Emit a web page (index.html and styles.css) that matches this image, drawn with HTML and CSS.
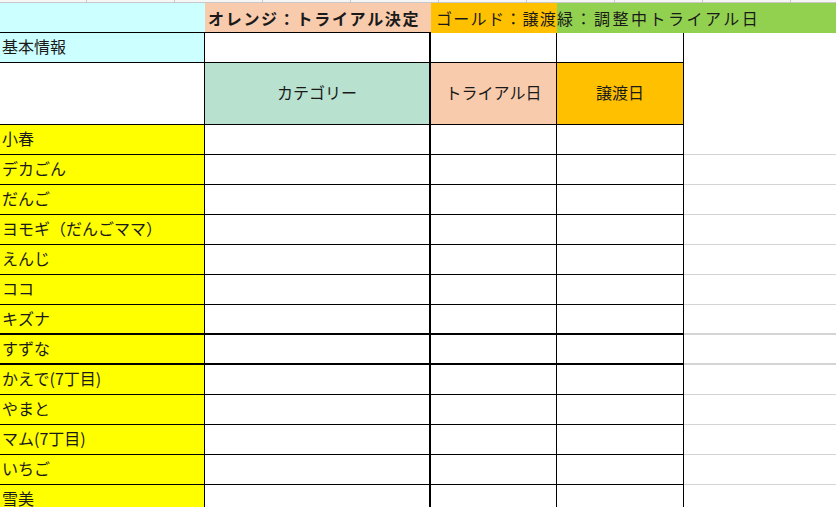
FILE: index.html
```html
<!DOCTYPE html>
<html lang="ja">
<head>
<meta charset="utf-8">
<title>シート</title>
<link rel="stylesheet" href="styles.css">
</head>
<body>
<div class="strip"></div>
<div class="sheet">
  <div class="cell l-cyan"></div>
  <div class="cell l-orange">オレンジ：トライアル決定</div>
  <div class="cell l-gold">ゴールド：譲渡</div>
  <div class="cell l-green">緑：調整中トライアル日</div>

  <div class="cell ca cyan">基本情報</div>
  <div class="cell cb"></div>
  <div class="cell cc"></div>
  <div class="cell cd"></div>
  <div class="cell cx"></div>

  <div class="cell ca"></div>
  <div class="cell cb mint center">カテゴリー</div>
  <div class="cell cc peach center">トライアル日</div>
  <div class="cell cd gold center">譲渡日</div>
  <div class="cell cx"></div>

  <div class="cell ca yellow">小春</div><div class="cell cb"></div><div class="cell cc"></div><div class="cell cd"></div><div class="cell ce"></div>
  <div class="cell ca yellow">デカごん</div><div class="cell cb"></div><div class="cell cc"></div><div class="cell cd"></div><div class="cell ce"></div>
  <div class="cell ca yellow">だんご</div><div class="cell cb"></div><div class="cell cc"></div><div class="cell cd"></div><div class="cell ce"></div>
  <div class="cell ca yellow">ヨモギ（だんごママ）</div><div class="cell cb"></div><div class="cell cc"></div><div class="cell cd"></div><div class="cell ce"></div>
  <div class="cell ca yellow">えんじ</div><div class="cell cb"></div><div class="cell cc"></div><div class="cell cd"></div><div class="cell ce"></div>
  <div class="cell ca yellow">ココ</div><div class="cell cb"></div><div class="cell cc"></div><div class="cell cd"></div><div class="cell ce"></div>
  <div class="cell ca yellow thick">キズナ</div><div class="cell cb thick"></div><div class="cell cc thick"></div><div class="cell cd thick"></div><div class="cell ce thick"></div>
  <div class="cell ca yellow thick">すずな</div><div class="cell cb thick"></div><div class="cell cc thick"></div><div class="cell cd thick"></div><div class="cell ce thick"></div>
  <div class="cell ca yellow">かえで(7丁目)</div><div class="cell cb"></div><div class="cell cc"></div><div class="cell cd"></div><div class="cell ce"></div>
  <div class="cell ca yellow">やまと</div><div class="cell cb"></div><div class="cell cc"></div><div class="cell cd"></div><div class="cell ce"></div>
  <div class="cell ca yellow">マム(7丁目)</div><div class="cell cb"></div><div class="cell cc"></div><div class="cell cd"></div><div class="cell ce"></div>
  <div class="cell ca yellow">いちご</div><div class="cell cb"></div><div class="cell cc"></div><div class="cell cd"></div><div class="cell ce"></div>
  <div class="cell ca yellow">雪美</div><div class="cell cb"></div><div class="cell cc"></div><div class="cell cd"></div><div class="cell ce"></div>
</div>
</body>
</html>
```

FILE: styles.css
```css
html, body {
  margin: 0;
  padding: 0;
  background: #ffffff;
}
body {
  width: 836px;
  height: 507px;
  overflow: hidden;
  font-family: "Noto Sans CJK JP", "Noto Sans", sans-serif;
  color: #1a1a1a;
}
.strip {
  height: 3px;
  box-sizing: border-box;
  border-bottom: 1px solid #c8c8c8;
  background: repeating-linear-gradient(to right, #f6f6f6 0 86px, #c8c8c8 86px 87px, #f6f6f6 87px 88px);
}
.sheet {
  display: grid;
  grid-template-columns: 205px 226px 126px 127px 1fr;
  grid-template-rows: 30px 30px 62px;
  grid-auto-rows: 30px;
}
.cell {
  box-sizing: border-box;
  display: flex;
  align-items: center;
  white-space: nowrap;
  overflow: hidden;
  font-size: 16px;
  line-height: 1;
  padding-left: 2px;
  padding-bottom: 3px;
}
.center {
  justify-content: center;
  padding-left: 0;
}
.l-cyan {
  background: #ccffff;
  border-bottom: 1px solid #000;
}
.l-orange {
  background: #f8cbad;
  border-bottom: 1px solid #000;
  font-weight: bold;
  letter-spacing: 1.7px;
  padding-left: 3px;
  padding-bottom: 0;
}
.l-gold {
  background: #ffc000;
  letter-spacing: 1.3px;
  padding-left: 5px;
  padding-bottom: 1px;
}
.l-green {
  grid-column: span 2;
  background: #92d050;
  letter-spacing: 2.5px;
  padding-left: 0;
  padding-bottom: 1px;
}
.ca {
  border-right: 1px solid #000;
  border-bottom: 1px solid #000;
}
.cb {
  border-right: 2px solid #000;
  border-bottom: 1px solid #000;
}
.cc, .cd {
  border-right: 1px solid #000;
  border-bottom: 1px solid #000;
}
.ce {
  border-bottom: 1px solid #d4d4d4;
}
.thick {
  border-bottom-width: 2px;
}
.cyan { background: #ccffff; }
.yellow { background: #ffff00; }
.mint { background: #b8e1cf; }
.peach { background: #f8cbad; }
.gold { background: #ffc000; }
```
